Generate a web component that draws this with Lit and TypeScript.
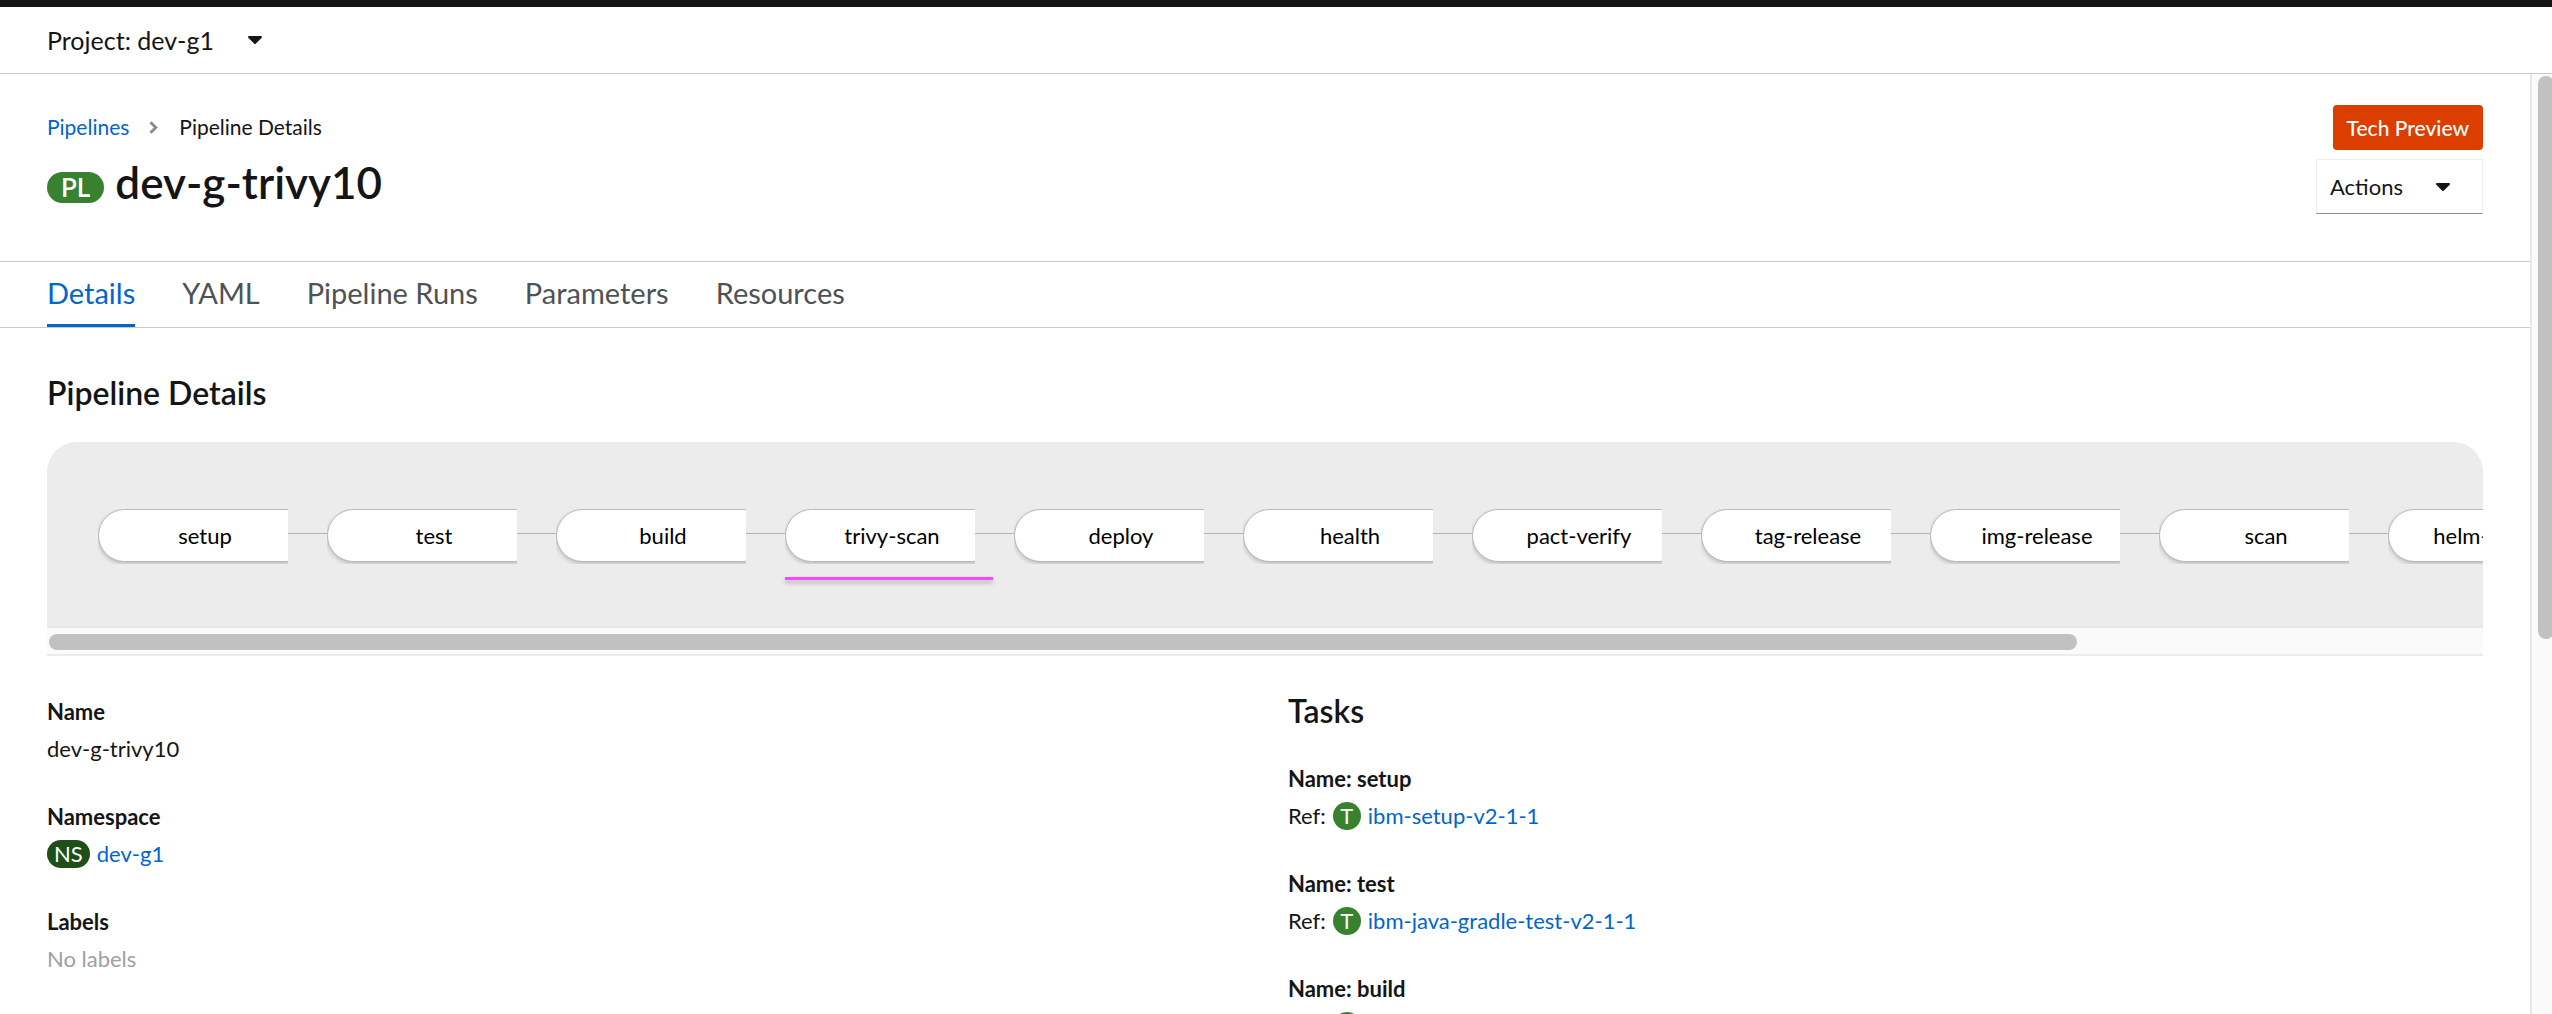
import { LitElement, html, css } from "lit";
import { customElement, property } from "lit/decorators.js";
import { classMap } from "lit/directives/class-map.js";

const caret = html`<svg class="caret" viewBox="0 0 14 8" aria-hidden="true">
  <path d="M1 0h12a1 1 0 0 1 .7 1.7L7.7 7.7a1 1 0 0 1-1.4 0L.3 1.7A1 1 0 0 1 1 0z" fill="currentColor" />
</svg>`;

@customElement("resource-badge")
export class ResourceBadge extends LitElement {
  @property() kind = "";
  static styles = css`
    :host { display: inline-flex; }
    .badge {
      display: inline-flex; align-items: center; justify-content: center;
      box-sizing: border-box; min-width: 28px; height: 28px; padding: 0 7px;
      border-radius: 16px; background: #38812f; color: #fff;
      font-size: 22px; line-height: 28px;
    }
    .ns { background: #1e4f18; }
    .pl { height: 31px; padding: 0 14px; font-size: 26px; font-weight: 600; line-height: 31px; }
  `;
  render() {
    return html`<span class=${classMap({ badge: true, ns: this.kind === "NS", pl: this.kind === "PL" })}>${this.kind}</span>`;
  }
}

@customElement("pipeline-graph")
export class PipelineGraph extends LitElement {
  @property({ attribute: false }) tasks: string[] = [];
  @property() current = "";
  static styles = css`
    :host { display: block; }
    .panel { overflow: hidden; border-radius: 30px 30px 0 0; background: #ececec; }
    .nodes {
      display: flex; margin: 0; padding: 67px 51px 50px; list-style: none;
    }
    .node { flex: none; width: 229px; height: 67px; }
    .link { display: flex; align-items: flex-start; }
    .link::after {
      content: ""; flex: 1; height: 1px; margin-top: 24px;
      background: #b0b4b8;
    }
    .node:last-child .link::after { visibility: hidden; }
    .clip { width: 190px; height: 55px; overflow: hidden; }
    .pill {
      box-sizing: border-box; width: 214px; height: 53px;
      border: 1px solid #b5b8bb; border-radius: 27px; background: #fff;
      box-shadow: 0 2px 4px rgba(0, 0, 0, 0.2);
      color: #000; font-size: 22px; line-height: 51px; text-align: center;
    }
    .mark {
      width: 208px; height: 3px; margin-top: 13px;
      background: #f846f8; box-shadow: 0 3px 4px rgba(0, 0, 0, 0.25);
    }
    .track {
      box-sizing: border-box; height: 30px; padding: 6px 2px 0;
      border-top: 2px solid #e7e7e7; border-bottom: 2px solid #ececec; background: #fafafa;
    }
    .thumb { width: 83.4%; height: 16px; border-radius: 8px; background: #c1c1c1; }
  `;
  render() {
    return html`
      <div class="panel">
        <ul class="nodes">
          ${this.tasks.map(
            (t) => html`<li class="node">
              <div class="link"><div class="clip"><div class="pill">${t}</div></div></div>
              ${t === this.current ? html`<div class="mark"></div>` : ""}
            </li>`
          )}
        </ul>
      </div>
      <div class="track"><div class="thumb"></div></div>
    `;
  }
}

@customElement("app-root")
export class AppRoot extends LitElement {
  private tabs = ["Details", "YAML", "Pipeline Runs", "Parameters", "Resources"];
  private nodes = [
    "setup", "test", "build", "trivy-scan", "deploy", "health",
    "pact-verify", "tag-release", "img-release", "scan", "helm-release",
  ];
  private tasks = [
    { name: "setup", ref: "ibm-setup-v2-1-1" },
    { name: "test", ref: "ibm-java-gradle-test-v2-1-1" },
    { name: "build", ref: "" },
  ];

  static styles = css`
    :host {
      display: flex; flex-direction: column; height: 100vh; overflow: hidden;
      background: #fff; color: #151515;
      font-family: Lato, "Liberation Sans", sans-serif; font-size: 22px; line-height: 32px;
    }
    a { color: #06c; text-decoration: none; }
    button { font: inherit; color: inherit; background: none; border: 0; padding: 0; cursor: pointer; }
    h1, h2, dl, dd, ol { margin: 0; padding: 0; }
    .masthead { flex: none; height: 7px; background: #151515; }
    .project { flex: none; display: flex; height: 66px; padding: 0 47px; border-bottom: 1px solid #c9c9c9; }
    .project-button { display: flex; align-items: center; gap: 34px; font-size: 25px; }
    .caret { display: block; width: 14px; height: 8px; }
    .body { flex: 1; min-height: 0; display: flex; }
    .page { flex: 1; min-width: 0; overflow: hidden; }
    .header { display: flex; justify-content: space-between; height: 187px; border-bottom: 1px solid #c9c9c9; padding: 0 47px; }
    .crumbs { display: flex; align-items: center; gap: 21px; margin-top: 37px; list-style: none; font-size: 21px; }
    .crumbs li { display: flex; align-items: center; gap: 20px; }
    .chevron { width: 9px; height: 13px; }
    .title { display: flex; align-items: center; gap: 11px; margin-top: 11px; }
    .title resource-badge { padding-top: 10px; }
    h1 { font-size: 44px; line-height: 56px; font-weight: 600; }
    .side { display: flex; flex-direction: column; align-items: flex-end; gap: 9px; margin-top: 31px; }
    .preview { padding: 0 14px; border-radius: 4px; background: #dc3e00; color: #fff; font-size: 21px; font-weight: 500; line-height: 45px; }
    .actions {
      display: flex; align-items: center; justify-content: space-between; box-sizing: border-box;
      width: 167px; height: 55px; padding: 0 32px 0 13px;
      border: 1px solid #ededed; border-bottom-color: #8a8d90;
    }
    .tabs { display: flex; gap: 47px; height: 66px; box-sizing: border-box; padding: 0 47px; border-bottom: 1px solid #c9c9c9; }
    .tab { font-size: 29px; line-height: 62px; height: 65px; box-sizing: border-box; color: #4f5255; border-bottom: 3px solid transparent; }
    .tab.active { color: #06c; border-bottom-color: #06c; }
    .content { padding: 45px 47px 0; }
    h2 { font-size: 32px; line-height: 40px; font-weight: 600; }
    .content > h2 { margin-bottom: 29px; }
    .columns { display: grid; grid-template-columns: 1fr 1fr; gap: 46px; padding-top: 35px; }
    .columns h2 { margin-bottom: 29px; }
    .summary { padding-top: 2px; }
    dt { font-weight: 700; line-height: 37px; }
    dd { display: flex; align-items: center; gap: 7px; height: 37px; margin-bottom: 31px; }
    .muted { color: #a0a0a0; }
    .gutter { flex: none; box-sizing: border-box; width: 22px; padding: 2px 0 0 6px; border-left: 2px solid #e7e7e7; background: #fafafa; overflow: hidden; }
    .gutter-thumb { width: 16px; height: 60%; border-radius: 8px; background: #c1c1c1; }
  `;

  render() {
    return html`
      <div class="masthead"></div>
      <div class="project">
        <button class="project-button" type="button">Project: dev-g1 ${caret}</button>
      </div>
      <div class="body">
        <main class="page">
          <header class="header">
            <div>
              <nav aria-label="Breadcrumb">
                <ol class="crumbs">
                  <li><a href="#pipelines">Pipelines</a>
                    <svg class="chevron" viewBox="0 0 9 13" aria-hidden="true">
                      <path d="M1.5 1.2 6.8 6.5 1.5 11.8" fill="none" stroke="#8a8d90" stroke-width="3" />
                    </svg>
                  </li>
                  <li>Pipeline Details</li>
                </ol>
              </nav>
              <div class="title"><resource-badge kind="PL"></resource-badge><h1>dev-g-trivy10</h1></div>
            </div>
            <div class="side">
              <span class="preview">Tech Preview</span>
              <button class="actions" type="button">Actions ${caret}</button>
            </div>
          </header>
          <nav class="tabs" aria-label="Pipeline">
            ${this.tabs.map((t, i) => html`<a href="#${t}" class=${classMap({ tab: true, active: i === 0 })}>${t}</a>`)}
          </nav>
          <section class="content">
            <h2>Pipeline Details</h2>
            <pipeline-graph .tasks=${this.nodes} current="trivy-scan"></pipeline-graph>
            <div class="columns">
              <dl class="summary">
                <dt>Name</dt>
                <dd>dev-g-trivy10</dd>
                <dt>Namespace</dt>
                <dd><resource-badge kind="NS"></resource-badge><a href="#dev-g1">dev-g1</a></dd>
                <dt>Labels</dt>
                <dd class="muted">No labels</dd>
              </dl>
              <div>
                <h2>Tasks</h2>
                <dl>
                  ${this.tasks.map(
                    (t) => html`<dt>Name: ${t.name}</dt>
                      <dd>Ref:<resource-badge kind="T"></resource-badge>${t.ref ? html`<a href="#${t.ref}">${t.ref}</a>` : ""}</dd>`
                  )}
                </dl>
              </div>
            </div>
          </section>
        </main>
        <div class="gutter"><div class="gutter-thumb"></div></div>
      </div>
    `;
  }
}
